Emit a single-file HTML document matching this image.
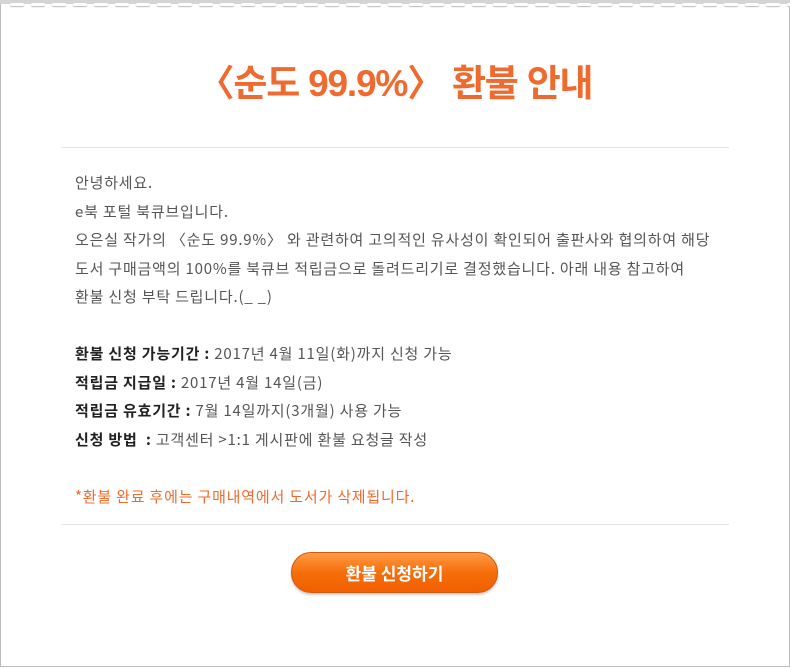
<!DOCTYPE html>
<html><head><meta charset="utf-8"><style>
html,body{margin:0;padding:0;width:790px;height:668px;overflow:hidden;background:#fff;font-family:"Liberation Sans","Noto Sans CJK KR",sans-serif}
.frame{position:absolute;left:0;top:0;width:788px;height:666px;border:1px solid #bdbdbd;border-top:none}
.top{position:absolute;left:0;top:0;width:790px;height:4px;background:#d4d4d4}
.dash{position:absolute;top:3px;height:3px;width:14px;background:#fff;border-radius:2px;box-shadow:0 1px 1px #bbb}
.title{position:absolute;left:0;width:790px;top:53px;text-align:center;font-size:37px;font-weight:bold;color:#ef6a2e;letter-spacing:-1.2px}
.hr{position:absolute;left:61px;width:668px;height:1px;background:#e2e2e2}
.body{position:absolute;left:75px;top:169px;font-family:"Noto Sans CJK KR",sans-serif;font-size:15px;color:#555;line-height:28.5px;letter-spacing:0.8px;white-space:nowrap}
.body b{color:#222}
.note{color:#f06a2a}
.btn{position:absolute;left:291px;top:552px;width:205px;height:39px;border-radius:20px;background:linear-gradient(#ff9a45,#f66e0a 50%,#f25f00);border:1px solid #d05a10;box-shadow:0 2px 2px #ccc;color:#fff;font-weight:bold;font-size:17px;text-align:center;line-height:39px;font-family:"Noto Sans CJK KR",sans-serif}
</style></head><body>
<div class="frame"></div>
<div class="top"></div>
<div id="d"></div>
<div class="title">〈순도 99.9%〉 환불 안내</div>
<div class="hr" style="top:147px"></div>
<div class="body">
안녕하세요.<br>
e북 포털 북큐브입니다.<br>
오은실 작가의 〈순도 99.9%〉 와 관련하여 고의적인 유사성이 확인되어 출판사와 협의하여 해당<br>
도서 구매금액의 100%를 북큐브 적립금으로 돌려드리기로 결정했습니다. 아래 내용 참고하여<br>
환불 신청 부탁 드립니다.(_ _)<br>
<br>
<b>환불 신청 가능기간 :</b> 2017년 4월 11일(화)까지 신청 가능<br>
<b>적립금 지급일 :</b> 2017년 4월 14일(금)<br>
<b>적립금 유효기간 :</b> 7월 14일까지(3개월) 사용 가능<br>
<b>신청 방법&nbsp; :</b> 고객센터 &gt;1:1 게시판에 환불 요청글 작성<br>
<br>
<span class="note">*환불 완료 후에는 구매내역에서 도서가 삭제됩니다.</span>
</div>
<div class="hr" style="top:524px"></div>
<div class="btn">환불 신청하기</div>
<script>
var h='';for(var x=10;x<790;x+=21)h+='<div class="dash" style="left:'+x+'px"></div>';document.getElementById('d').innerHTML=h;
</script>
</body></html>
